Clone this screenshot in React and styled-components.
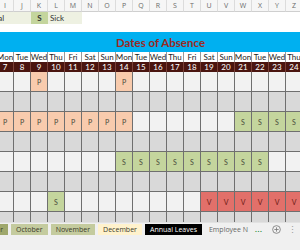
import React from 'react'
import styled, { createGlobalStyle } from 'styled-components'

const GlobalStyle = createGlobalStyle`
  html, body { margin: 0; padding: 0; background: #fff; }
  body {
    width: 300px;
    height: 250px;
    overflow: hidden;
    font-family: Lato, "Liberation Sans", sans-serif;
  }
`

const COL = 17
const FIRST = 6
const LAST = 24
const cols = []
for (let c = FIRST; c <= LAST; c++) cols.push(c)
const letters = 'HIJKLMNOPQRSTUVWXYZ'.split('')
// day 7 is a Monday
const dayNames = ['Mon', 'Tue', 'Wed', 'Thu', 'Fri', 'Sat', 'Sun']

const range = (a, b) => {
  const out = []
  for (let i = a; i <= b; i++) out.push(i)
  return out
}

const rows = [
  { P: [9, 14] },
  {},
  { P: range(6, 14), S: range(21, 24) },
  {},
  { S: range(14, 22) },
  {},
  { S: [10], V: range(19, 24) },
  {}
]

const fills = {
  P: '#f8cbad',
  S: '#c4d59d',
  V: '#e2706a'
}

const Page = styled.div`
  width: 300px;
  height: 250px;
  display: flex;
  flex-direction: column;
  overflow: hidden;
`
const Sheet = styled.div`
  flex: 1;
  overflow: hidden;
  margin-left: -20px;
  width: ${COL * cols.length}px;
  display: flex;
  flex-direction: column;
`
const Row = styled.div`
  display: grid;
  grid-template-columns: repeat(${cols.length}, ${COL}px);
  height: ${p => p.$h}px;
  flex-shrink: 0;
`
const Letter = styled.div`
  display: flex;
  align-items: center;
  justify-content: center;
  font-family: "Open Sans", "Liberation Sans", sans-serif;
  font-size: 7px;
  color: #6a6a6a;
  background: #f6f6f6;
  border-right: 1px solid #dcdcdc;
  border-bottom: 1px solid #cfcfcf;
`
const LegendCell = styled.div`
  grid-column: span ${p => p.$span || 1};
  display: flex;
  align-items: center;
  justify-content: ${p => (p.$center ? 'center' : 'flex-start')};
  padding-left: ${p => (p.$center ? 0 : 2)}px;
  background: ${p => p.$bg};
  font-size: 8px;
  font-weight: ${p => (p.$bold ? 700 : 400)};
  color: #333;
  white-space: nowrap;
  overflow: hidden;
`
const PersonalText = styled.span`
  margin-left: -8px;
`
const Spacer = styled.div`
  height: 8px;
  flex-shrink: 0;
`
const TitleBand = styled.div`
  height: 20px;
  flex-shrink: 0;
  background: #00b0f0;
  display: flex;
  align-items: center;
  justify-content: center;
  padding-left: 38px;
  font-size: 11.5px;
  font-weight: 700;
  color: #9b2a1f;
`
const DayName = styled.div`
  display: flex;
  align-items: center;
  justify-content: center;
  font-size: 8px;
  color: #222;
  background: #fff;
  border-right: 1px solid #9a9a9a;
  border-bottom: 1px solid #6a6a6a;
`
const DayNum = styled.div`
  display: flex;
  align-items: center;
  justify-content: center;
  font-size: 8px;
  color: #fff;
  background: #4a1510;
  border-right: 1px solid #7a4038;
  border-bottom: 1px solid #333;
`
const Cell = styled.div`
  display: flex;
  align-items: center;
  justify-content: center;
  font-size: 7px;
  color: ${p => (p.$kind === 'V' ? '#6d1c16' : '#4a4a3a')};
  background: ${p => fills[p.$kind] || p.$base};
  border-right: 1px solid #6f6f6f;
  border-bottom: 1px solid #6f6f6f;
`

const TabBar = styled.div`
  height: 26px;
  flex-shrink: 0;
  background: #f0f0f0;
  border-top: 1px solid #e2e2e2;
  display: flex;
  align-items: flex-start;
  padding-top: 1px;
  overflow: hidden;
`
const TabStrip = styled.div`
  display: flex;
  align-items: center;
  gap: 3px;
  margin-left: -38px;
`
const Tab = styled.div`
  height: 11px;
  padding: 0 ${p => p.$pad ?? 5}px;
  display: flex;
  align-items: center;
  font-family: "Open Sans", "Liberation Sans", sans-serif;
  font-size: 7px;
  color: ${p => p.$color || '#3a3a2a'};
  background: ${p => p.$bg || 'transparent'};
  white-space: nowrap;
`
const More = styled.span`
  color: #2e8b3a;
  font-size: 8px;
  font-weight: 700;
  letter-spacing: 0.5px;
  line-height: 11px;
`
const Controls = styled.div`
  display: flex;
  align-items: center;
  height: 11px;
  margin-left: 10px;
  gap: 7px;
`
const Dots = styled.span`
  font-size: 9px;
  color: #999;
  line-height: 11px;
`
const ScrollBtn = styled.div`
  width: 9px;
  height: 9px;
  background: #fff;
  border: 1px solid #e0e0e0;
  display: flex;
  align-items: center;
  justify-content: center;
`

const PlusCircle = () => (
  <svg width="9" height="9" viewBox="0 0 10 10">
    <circle cx="5" cy="5" r="4.3" fill="none" stroke="#777" strokeWidth="0.9" />
    <path d="M5 2.6v4.8M2.6 5h4.8" stroke="#777" strokeWidth="0.9" />
  </svg>
)

const kindOf = (row, c) => {
  for (const k of ['P', 'S', 'V']) {
    if (row[k] && row[k].includes(c)) return k
  }
  return null
}

export default function App() {
  return (
    <Page>
      <GlobalStyle />
      <Sheet>
        <Row $h={12}>
          {letters.map(l => (
            <Letter key={l}>{l}</Letter>
          ))}
        </Row>
        <Row $h={12}>
          <LegendCell $span={3} $bg="#eef1e2">
            <PersonalText>Personal</PersonalText>
          </LegendCell>
          <LegendCell $center $bold $bg="#c4d59d">S</LegendCell>
          <LegendCell $span={2} $bg="#eef1e2">Sick</LegendCell>
        </Row>
        <Spacer />
        <TitleBand>Dates of Absence</TitleBand>
        <Row $h={10}>
          {cols.map(c => (
            <DayName key={c}>{dayNames[c % 7]}</DayName>
          ))}
        </Row>
        <Row $h={10}>
          {cols.map(c => (
            <DayNum key={c}>{c}</DayNum>
          ))}
        </Row>
        {rows.map((row, i) => {
          const base = i % 2 === 0 ? '#f2f2f2' : '#d9d9d9'
          return (
            <Row key={i} $h={20}>
              {cols.map(c => {
                const k = kindOf(row, c)
                return (
                  <Cell key={c} $kind={k} $base={base}>
                    {k}
                  </Cell>
                )
              })}
            </Row>
          )
        })}
      </Sheet>
      <TabBar>
        <TabStrip>
          <Tab $bg="#9fa86c">September</Tab>
          <Tab $bg="#c4cb9e">October</Tab>
          <Tab $bg="#c4cb9e">November</Tab>
          <Tab $bg="#fff2cc">December</Tab>
          <Tab $bg="#000" $color="#fff">Annual Leaves</Tab>
          <Tab $color="#666" $pad={4}>Employee N</Tab>
          <More>...</More>
        </TabStrip>
        <Controls>
          <PlusCircle />
          <Dots>⋮</Dots>
          <ScrollBtn>
            <svg width="5" height="5" viewBox="0 0 5 5">
              <path d="M4 0.5L1 2.5L4 4.5Z" fill="#444" />
            </svg>
          </ScrollBtn>
        </Controls>
      </TabBar>
    </Page>
  )
}
